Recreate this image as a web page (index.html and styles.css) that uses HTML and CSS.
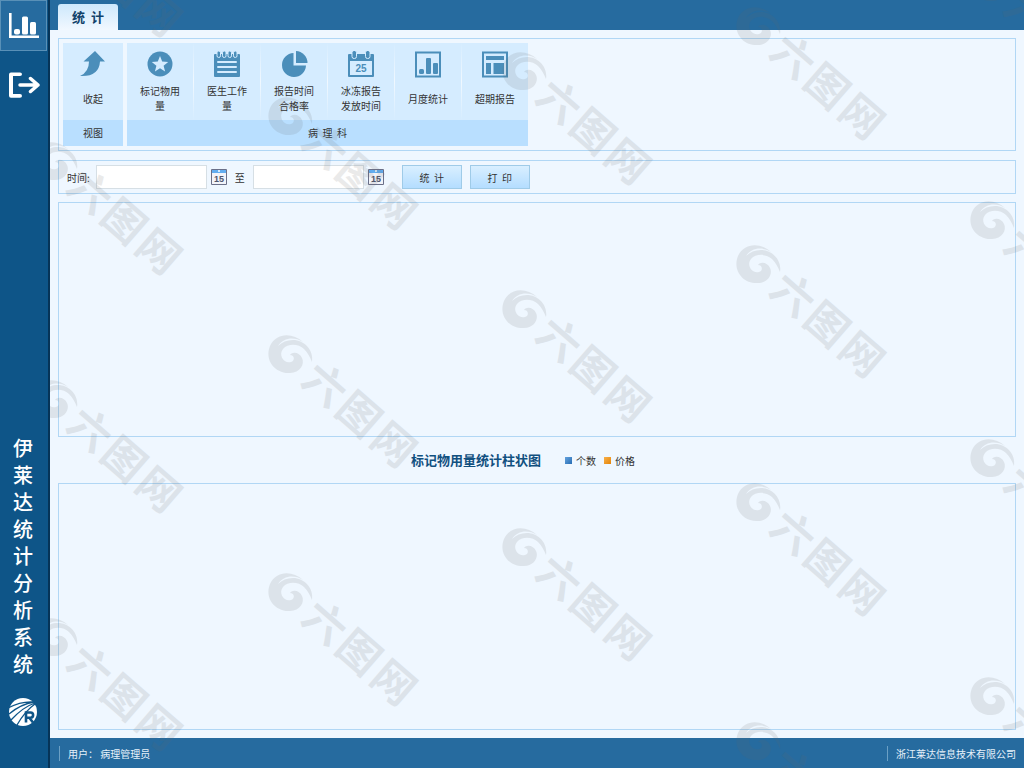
FILE: index.html
```
<!DOCTYPE html>
<html lang="zh-CN">
<head>
<meta charset="utf-8">
<meta name="viewport" content="width=device-width, initial-scale=1">
<title>伊莱达统计分析系统</title>
<link rel="stylesheet" href="styles.css">
</head>
<body>
<div class="app">
  <aside class="sidebar">
    <nav class="side-nav">
      <a class="side-link active" href="#stats" aria-label="统计">
        <svg width="32" height="28" viewBox="0 0 32 28"><path d="M1 1h2.600v22.600H31V26H1z"/><rect x="6" y="17" width="6" height="5.500" rx="2"/><rect x="14" y="4.500" width="6" height="18" rx="1.500"/><rect x="22" y="10" width="6" height="12.500" rx="1.500"/></svg>
      </a>
      <a class="side-link" href="#exit" aria-label="退出">
        <svg width="32" height="28" viewBox="0 0 32 28"><path d="M12 1.500q2 0 2 1.800t-2 1.800H5v18h7q2 0 2 1.800t-2 1.800H3q-2 0-2-2V3.500q0-2 2-2z"/><path d="M12 14h18M22.500 7.500l7.500 6.500-7.500 6.500" fill="none" stroke="#fff" stroke-width="3.500" stroke-linecap="round" stroke-linejoin="round"/></svg>
      </a>
    </nav>
    <div class="brand">
      <h1 class="brand-name">伊莱达统计分析系统</h1>
      <svg width="30" height="30" viewBox="0 0 30 30"><circle cx="15" cy="15" r="14"/><g fill="none" stroke="#0e5588" stroke-width="1.300"><path d="M0 11Q13 4 26 5M1 17Q13 7 26 5M3 23Q15 10 27 6M9 28Q17 14 27 7"/><path d="M18 25.500V15.500h4.500a2.600 2.600 0 0 1 0 5.200H18M21.500 21l3.500 4.500" stroke-width="2.600"/></g></svg>
    </div>
  </aside>
  <div class="main">
    <header class="topbar"><a class="tab" href="#stats">统&nbsp; 计</a></header>
    <main class="content">
      <section class="panel ribbon">
        <div class="group view-group">
          <div class="tools">
            <button class="tool" type="button"><svg class="icon" viewBox="0 0 28 28"><path d="M16 0l10 10.500h-5Q20 26 1 25q9-4 9-14.500H4.500z"/></svg><span class="tool-label">收起</span></button>
          </div>
          <div class="group-label">视图</div>
        </div>
        <div class="group report-group">
          <div class="tools">
            <button class="tool" type="button"><svg class="icon" viewBox="0 0 28 28"><circle cx="14" cy="13" r="12.500"/><path d="M14 5l2.200 5.500 6 .4-4.600 3.800 1.500 5.800-5.100-3.200-5.100 3.200 1.500-5.800-4.600-3.800 6-.4z" fill="#d5ecff"/></svg><span class="tool-label">标记物用量</span></button>
            <button class="tool" type="button"><svg class="icon" viewBox="0 0 28 28"><rect x="1" y="3" width="26" height="23" rx="1"/><g stroke="#d5ecff"><rect x="4" y="0" width="3.500" height="6.500" rx="1.700"/><rect x="9.500" y="0" width="3.500" height="6.500" rx="1.700"/><rect x="15" y="0" width="3.500" height="6.500" rx="1.700"/><rect x="20.500" y="0" width="3.500" height="6.500" rx="1.700"/></g><path d="M5 11h18M5 16h18M5 21h18" stroke="#d5ecff" stroke-width="2" stroke-linecap="round"/></svg><span class="tool-label">医生工作量</span></button>
            <button class="tool" type="button"><svg class="icon" viewBox="0 0 28 28"><path d="M13.500 2v12.500h12.500a12 12 0 1 1-12.500-12.500z"/><path d="M16 0a12 12 0 0 1 11.500 12H16z"/></svg><span class="tool-label">报告时间合格率</span></button>
            <button class="tool" type="button"><svg class="icon" viewBox="0 0 28 28"><rect x="1" y="3" width="26" height="23" rx="1"/><rect x="3" y="10" width="22" height="14" fill="#d5ecff"/><g stroke="#d5ecff"><rect x="5" y="-.5" width="4.500" height="8" rx="2"/><rect x="18.500" y="-.5" width="4.500" height="8" rx="2"/></g><text class="cal-text" x="14" y="21" text-anchor="middle">25</text></svg><span class="tool-label">冰冻报告发放时间</span></button>
            <button class="tool" type="button"><svg class="icon" viewBox="0 0 28 28"><rect x="2" y="1.500" width="24" height="24" fill="none" stroke="#4b8eba" stroke-width="2"/><rect x="5" y="18" width="5" height="5" rx="1.500"/><rect x="12" y="7" width="5" height="16" rx="1"/><rect x="19" y="12" width="5" height="11" rx="1"/></svg><span class="tool-label">月度统计</span></button>
            <button class="tool" type="button"><svg class="icon" viewBox="0 0 28 28"><rect x="2" y="1.500" width="24" height="24" fill="none" stroke="#4b8eba" stroke-width="2"/><path d="M5 5h18v4H5zM5 12h5v11H5zM12.500 12H23v11H12.500z"/></svg><span class="tool-label">超期报告</span></button>
          </div>
          <div class="group-label">病&nbsp; 理&nbsp; 科</div>
        </div>
      </section>

      <form class="panel filter">
        <label for="from">时间:</label>
        <input class="date" id="from" type="text">
        <button class="cal" type="button" aria-label="选择开始日期"><svg width="16" height="16" viewBox="0 0 16 16"><path d="M.5.500h15v15H.5z" fill="#f2f4fa" stroke="#6b7089"/><path d="M1 1h14v3H1z" fill="#62adf0"/><path d="M7 1h2v2H7z" fill="#d5ecff"/><text class="cal-day" x="8" y="13" text-anchor="middle">15</text></svg></button>
        <label class="to-label" for="to">至</label>
        <input class="date" id="to" type="text">
        <button class="cal" type="button" aria-label="选择结束日期"><svg width="16" height="16" viewBox="0 0 16 16"><path d="M.5.500h15v15H.5z" fill="#f2f4fa" stroke="#6b7089"/><path d="M1 1h14v3H1z" fill="#62adf0"/><path d="M7 1h2v2H7z" fill="#d5ecff"/><text class="cal-day" x="8" y="13" text-anchor="middle">15</text></svg></button>
        <div class="actions">
          <button class="btn" type="button">统&nbsp; 计</button>
          <button class="btn" type="button">打&nbsp; 印</button>
        </div>
      </form>

      <section class="panel results" aria-label="统计结果"></section>
      <div class="chart-head">
        <h2 class="chart-title">标记物用量统计柱状图</h2>
        <ul class="legend">
          <li class="legend-item count">个数</li>
          <li class="legend-item price">价格</li>
        </ul>
      </div>
      <section class="panel chart" aria-label="柱状图"></section>
    </main>
    <footer class="statusbar">
      <span class="status">用户： 病理管理员</span>
      <span class="status">浙江莱达信息技术有限公司</span>
    </footer>
    <svg class="watermark" aria-hidden="true">
      <defs>
        <g id="mark">
          <path d="M13-13C2-23-14-22-20-9C-26 6-14 19 0 18C10 18 15 9 12 3C10-2 3-4 0 0C5 0 5 6 1 7C-6 9-12 0-7-6C-2-12 9-11 14-6C18-2 20 2 22 7C24-5 14-15 3-15C-3-15-8-13-12-9C-7-17 4-19 13-13Z"/>
          <text class="mark-text" transform="translate(35 30) rotate(41)"><tspan x="0" y="15">六</tspan><tspan x="45" y="15">图</tspan><tspan x="91" y="15">网</tspan></text>
        </g>
      </defs>
      <use href="#mark" x="5" y="-76"/><use href="#mark" x="5" y="162"/><use href="#mark" x="5" y="400"/><use href="#mark" x="5" y="638"/>
      <use href="#mark" x="240" y="117"/><use href="#mark" x="240" y="355"/><use href="#mark" x="240" y="593"/>
      <use href="#mark" x="474" y="72"/><use href="#mark" x="474" y="310"/><use href="#mark" x="474" y="548"/>
      <use href="#mark" x="708" y="27"/><use href="#mark" x="708" y="265"/><use href="#mark" x="708" y="503"/><use href="#mark" x="708" y="742"/>
      <use href="#mark" x="942" y="-17"/><use href="#mark" x="942" y="221"/><use href="#mark" x="942" y="459"/><use href="#mark" x="942" y="697"/>
    </svg>
  </div>
</div>
</body>
</html>
```
FILE: styles.css
```
* { box-sizing: border-box; }

body {
  margin: 0;
  font: 10px/15px "Noto Sans CJK SC", sans-serif;
  color: #333;
  background: #eff7ff;
}

h1, h2, ul { margin: 0; padding: 0; }
button, input { font: inherit; color: inherit; }
button { cursor: pointer; }

.app { display: flex; min-height: 100vh; }

.sidebar {
  flex: none;
  width: 50px;
  display: flex;
  flex-direction: column;
  justify-content: space-between;
  background: #0e5588;
  border-right: 2px solid #063458;
}

.side-link {
  display: flex;
  align-items: center;
  justify-content: center;
  height: 51px;
  margin-right: 1px;
  border: 1px solid transparent;
  fill: #fff;
}

.side-link.active { background: #266b9f; border-color: #5990b7; }
.side-link + .side-link { margin-top: 8px; }

.brand {
  display: flex;
  flex-direction: column;
  align-items: center;
  gap: 20px;
  padding-bottom: 41px;
  padding-right: 2px;
  fill: #fff;
}

.brand-name {
  width: 20px;
  font-size: 20px;
  line-height: 27px;
  font-weight: 500;
  color: #fff;
}

.main {
  position: relative;
  flex: 1;
  min-width: 0;
  display: flex;
  flex-direction: column;
}

.topbar {
  display: flex;
  align-items: flex-end;
  height: 30px;
  padding-left: 8px;
  background: #266b9f;
}

.tab {
  width: 60px;
  height: 26px;
  border-radius: 3px 3px 0 0;
  background: linear-gradient(#cde8fc, #f1f8ff);
  color: #11436b;
  font-size: 13px;
  line-height: 26px;
  font-weight: 700;
  text-align: center;
  text-decoration: none;
}

.content {
  flex: 1;
  display: flex;
  flex-direction: column;
  padding: 8px 8px 8px;
}

.panel { border: 1px solid #b1d7f5; }

.ribbon { display: flex; gap: 4px; padding: 4px; min-height: 113px; }
.group { display: flex; flex-direction: column; background: #d5ecff; }
.view-group { width: 60px; }
.report-group { width: 401px; }
.tools { display: flex; flex: 1; }

.tool {
  flex: 1;
  display: flex;
  flex-direction: column;
  align-items: center;
  padding: 8px 8px 0;
  border: 0;
  background: none;
}

.tool + .tool {
  border-left: 1px solid;
  border-image: linear-gradient(#d5ecff, #f0f8ff, #d5ecff) 1;
}

.icon { width: 28px; height: 28px; fill: #4b8eba; }

.tool-label {
  display: flex;
  align-items: center;
  width: 42px;
  height: 30px;
  margin-top: 4px;
  justify-content: center;
}

.group-label {
  height: 26px;
  line-height: 26px;
  text-align: center;
  background: #b9dfff;
}

.cal-text { font: bold 10px "Liberation Sans", sans-serif; }
.cal-day { font: bold 9px "Liberation Sans", sans-serif; fill: #50566c; }

.filter {
  display: flex;
  align-items: center;
  min-height: 34px;
  margin: 9px 0 8px;
  padding: 0 8px;
}

.date {
  width: 111px;
  height: 24px;
  margin-left: 6px;
  border: 1px solid #d6dfe5;
  background: #fff;
}

.cal {
  width: 16px;
  height: 16px;
  margin-left: 4px;
  padding: 0;
  border: 0;
  background: none;
}

.cal svg { display: block; }
.to-label { margin: 0 2px 0 8px; }
.actions { display: flex; gap: 8px; margin-left: 18px; }

.btn {
  width: 60px;
  height: 24px;
  padding: 0;
  border: 1px solid #9fcbe8;
  background: linear-gradient(#d9efff, #b4ddff);
}

.results { flex: 235 1 0; min-height: 100px; }
.chart { flex: 247 1 0; min-height: 100px; }

.chart-head {
  display: flex;
  align-items: center;
  justify-content: center;
  gap: 24px;
  height: 46px;
  padding-right: 28px;
}

.chart-title {
  font-size: 13px;
  line-height: 20px;
  font-weight: 700;
  color: #11507f;
}

.legend { display: flex; gap: 8px; list-style: none; }
.legend-item { display: flex; align-items: center; gap: 4px; }
.legend-item::before { content: ""; width: 7px; height: 7px; }
.count::before { background: linear-gradient(135deg, #63a2dd, #286db4); }
.price::before { background: linear-gradient(135deg, #f8b04a, #e38408); }

.statusbar {
  display: flex;
  align-items: center;
  justify-content: space-between;
  height: 30px;
  padding: 0 8px 0 9px;
  background: #266b9f;
  color: #e6f1fa;
}

.status {
  padding-left: 8px;
  border-left: 1px solid #6ba0c5;
  white-space: pre;
}

.watermark {
  position: absolute;
  inset: 0;
  width: 100%;
  height: 100%;
  overflow: hidden;
  pointer-events: none;
  fill: #646464;
  opacity: 0.13;
}

.mark-text {
  font: 700 42px "Noto Sans CJK SC", sans-serif;
  text-anchor: middle;
}
```
